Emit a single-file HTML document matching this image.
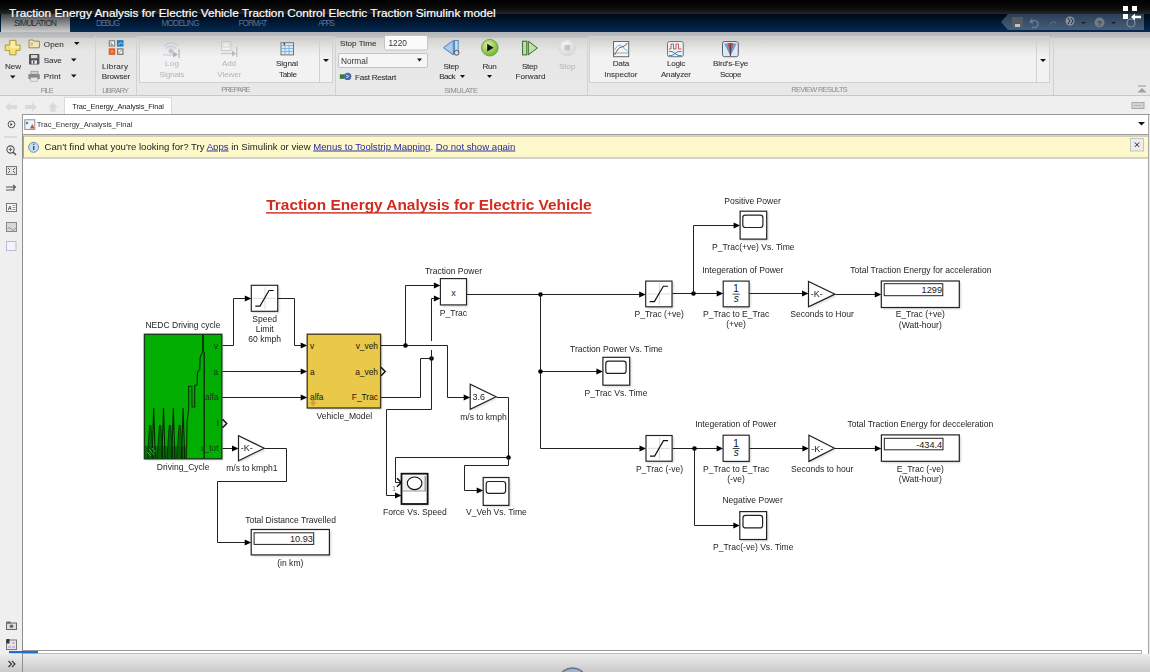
<!DOCTYPE html>
<html><head><meta charset="utf-8">
<style>
html,body{margin:0;padding:0;width:1150px;height:672px;overflow:hidden;background:#fff;}
svg{display:block;position:absolute;left:0;top:0;filter:blur(0.35px);}
text{font-family:"Liberation Sans",sans-serif;}
</style></head>
<body>
<svg width="1150" height="672" viewBox="0 0 1150 672">
<defs>
  <linearGradient id="gTop" x1="0" y1="0" x2="0" y2="1">
    <stop offset="0" stop-color="#000"/><stop offset="0.6" stop-color="#0c0c0c"/><stop offset="1" stop-color="#262626"/>
  </linearGradient>
  <linearGradient id="gTabs" x1="0" y1="0" x2="0" y2="1">
    <stop offset="0" stop-color="#000812"/><stop offset="0.5" stop-color="#011a36"/><stop offset="1" stop-color="#062a52"/>
  </linearGradient>
  <linearGradient id="gSimTab" x1="0" y1="0" x2="0" y2="1">
    <stop offset="0" stop-color="#3e4044"/><stop offset="0.45" stop-color="#808284"/><stop offset="1" stop-color="#cdcdcd"/>
  </linearGradient>
  <linearGradient id="gRib" x1="0" y1="0" x2="0" y2="1">
    <stop offset="0" stop-color="#b2b5b8"/><stop offset="0.08" stop-color="#bdbfc0"/><stop offset="0.1" stop-color="#d4d4d2"/><stop offset="0.3" stop-color="#e6e6e6"/><stop offset="1" stop-color="#e9e9e9"/>
  </linearGradient>
  <linearGradient id="gPanel" x1="0" y1="0" x2="0" y2="1">
    <stop offset="0" stop-color="#cbccc8"/><stop offset="0.3" stop-color="#eaeaea"/><stop offset="0.45" stop-color="#f2f2f2"/><stop offset="1" stop-color="#f2f2f2"/>
  </linearGradient>
  <linearGradient id="gStatus" x1="0" y1="0" x2="0" y2="1">
    <stop offset="0" stop-color="#ececec"/><stop offset="1" stop-color="#c9c9c9"/>
  </linearGradient>
  <linearGradient id="gQat" x1="0" y1="0" x2="0" y2="1">
    <stop offset="0" stop-color="#2c3f58"/><stop offset="1" stop-color="#465e7a"/>
  </linearGradient>
</defs>

<!-- ===== title bar ===== -->
<rect x="0" y="0" width="1150" height="14" fill="url(#gTop)"/>
<rect x="0" y="14" width="1150" height="18" fill="url(#gTabs)"/>
<rect x="1" y="14" width="69" height="18" fill="url(#gSimTab)"/>
<g font-size="8.2" fill="#5c7090">
  <text x="14" y="25.5" fill="#2a2a2a" textLength="43">SIMULATION</text>
  <text x="96" y="25.5" textLength="24">DEBUG</text>
  <text x="161.5" y="25.5" textLength="38">MODELING</text>
  <text x="238.5" y="25.5" textLength="29">FORMAT</text>
  <text x="318" y="25.5" textLength="17">APPS</text>
</g>
<text x="9" y="16.8" font-size="11.8" fill="#fff" stroke="#fff" stroke-width="0.2">Traction Energy Analysis for Electric Vehicle Traction Control Electric Traction Simulink model</text>
<!-- QAT -->
<path d="M1008 14 H1144 V30 H1008 L1001 22 Z" fill="url(#gQat)"/>
<g opacity="0.8">
 <rect x="1012" y="17" width="11" height="11" fill="#5a5e64"/><rect x="1015" y="24" width="5" height="3" fill="#ddd"/>
 <path d="M1032 19 l-2 3 l3 1 M1031 22 c3 -3 8 -1 7 3 c-1 3 -4 3 -6 2" stroke="#6e86a4" stroke-width="1.4" fill="none"/>
 <path d="M1050 25 c1 -4 6 -4 6 -1" stroke="#5a6f88" stroke-width="1.3" fill="none"/>
 <circle cx="1070" cy="21" r="4.5" fill="#9aa3ad"/><path d="M1068 18 l2 3 l-2 3 M1071 18 l2 3 l-2 3" stroke="#222" stroke-width="1" fill="none"/>
 <path d="M1081 22 h5 l-2.5 2 z" fill="#111"/>
 <circle cx="1099.5" cy="22.5" r="5" fill="#7d8790"/><text x="1097" y="26" font-size="8" font-weight="bold" fill="#333">?</text>
 <path d="M1111 22 h5 l-2.5 2 z" fill="#111"/>
 <circle cx="1131" cy="23" r="4" fill="none" stroke="#8fa0b4" stroke-width="1.2"/>
</g>
<!-- video overlay icon -->
<g fill="#fff">
 <rect x="1123" y="6" width="5" height="5"/><rect x="1132" y="6" width="5" height="5"/><rect x="1123" y="14" width="5" height="5"/>
 <path d="M1131 17 l4 -3.5 v2.3 h6 v2.4 h-6 v2.3 z"/>
</g>

<!-- ===== ribbon ===== -->
<rect x="0" y="32" width="1150" height="64" fill="url(#gRib)"/>
<line x1="0" y1="95.5" x2="1150" y2="95.5" stroke="#c8c8c8" stroke-width="1"/>
<!-- separators -->
<g stroke="#d2d2d2" stroke-width="1">
  <line x1="95.5" y1="36" x2="95.5" y2="95"/>
  <line x1="136.5" y1="36" x2="136.5" y2="95"/>
  <line x1="335.5" y1="36" x2="335.5" y2="95"/>
  <line x1="587.5" y1="36" x2="587.5" y2="95"/>
  <line x1="1053.5" y1="36" x2="1053.5" y2="95"/>
</g>
<!-- panels -->
<rect x="139.5" y="36.5" width="193" height="46" fill="url(#gPanel)" stroke="#d0d0d0"/>
<line x1="319.5" y1="37" x2="319.5" y2="82" stroke="#d0d0d0"/>
<rect x="589.5" y="36.5" width="460" height="46" fill="url(#gPanel)" stroke="#d0d0d0"/>
<line x1="1036.5" y1="37" x2="1036.5" y2="82" stroke="#d0d0d0"/>
<path d="M323 59 h6 l-3 3 z" fill="#111"/>
<path d="M1040 59 h6 l-3 3 z" fill="#111"/>
<!-- ribbon texts -->
<g font-size="8.1" fill="#333" stroke="#333" stroke-width="0.08">
  <text x="5" y="68.8" textLength="16">New</text>
  <text x="43.8" y="46.7" textLength="20">Open</text>
  <text x="43.8" y="62.5" textLength="18">Save</text>
  <text x="43.8" y="78.8" textLength="17">Print</text>
  <text x="102" y="68.8" textLength="26">Library</text>
  <text x="101.7" y="79.2" textLength="28.6">Browser</text>
  <text x="276" y="66.1" textLength="22">Signal</text>
  <text x="279" y="77" textLength="18">Table</text>
  <text x="340" y="46.1" textLength="36.4">Stop Time</text>
  <text x="355" y="79.5" textLength="41.3">Fast Restart</text>
  <text x="443.4" y="69.1" textLength="15.7">Step</text>
  <text x="439.2" y="79" textLength="16.4">Back</text>
  <text x="482.6" y="69.1" textLength="14.1">Run</text>
  <text x="522" y="69.1" textLength="15.7">Step</text>
  <text x="515.5" y="79" textLength="30">Forward</text>
  <text x="612.7" y="65.9" textLength="16.5">Data</text>
  <text x="604.3" y="77.2" textLength="33.1">Inspector</text>
  <text x="667" y="65.9" textLength="18.2">Logic</text>
  <text x="660.9" y="77.2" textLength="30.1">Analyzer</text>
  <text x="713" y="65.9" textLength="35.3">Bird's-Eye</text>
  <text x="720" y="77.2" textLength="21.4">Scope</text>
</g>
<g font-size="8.1" fill="#b4b4b4">
  <text x="165" y="66.1" textLength="14">Log</text>
  <text x="159.2" y="77" textLength="25.2">Signals</text>
  <text x="222" y="66.1" textLength="14">Add</text>
  <text x="217.3" y="77" textLength="24.1">Viewer</text>
  <text x="558.9" y="69.1" textLength="16.5">Stop</text>
</g>
<g font-size="7.4" fill="#8a8a8a">
  <text x="40.8" y="92.6" textLength="12.8">FILE</text>
  <text x="102.3" y="92.6" textLength="26.7">LIBRARY</text>
  <text x="221.3" y="92.2" textLength="29.2">PREPARE</text>
  <text x="444.3" y="92.6" textLength="33.6">SIMULATE</text>
  <text x="791.2" y="91.8" textLength="56.6">REVIEW RESULTS</text>
</g>
<!-- dropdown arrows -->
<g fill="#111">
  <path d="M74 42 h5.5 l-2.75 3 z"/>
  <path d="M71 58.5 h5.5 l-2.75 3 z"/>
  <path d="M71 74.5 h5.5 l-2.75 3 z"/>
  <path d="M10 75.5 h5.5 l-2.75 3 z"/>
  <path d="M460 75 h5 l-2.5 3 z"/>
  <path d="M487 75 h5 l-2.5 3 z"/>
</g>
<!-- stop time inputs -->
<rect x="384.5" y="35.5" width="43" height="14.5" rx="1.5" fill="#fafafa" stroke="#c4c4c4"/>
<text x="388.5" y="46.3" font-size="8.3" fill="#333">1220</text>
<rect x="338.5" y="53.5" width="89" height="14" rx="1.5" fill="#f6f6f6" stroke="#c4c4c4"/>
<text x="341" y="63.5" font-size="8.3" fill="#333">Normal</text>
<path d="M417 58.5 h5 l-2.5 3 z" fill="#111"/>
<path d="M1138 86 h8" stroke="#9a9a9a" stroke-width="1"/><path d="M1137.5 92.5 h9 l-4.5 -4.5 z" fill="#a0a0a0"/>

<!-- ===== tab strip ===== -->
<rect x="0" y="96" width="1150" height="19" fill="#efefef"/>
<rect x="64.5" y="97.5" width="107" height="17" fill="#fff" stroke="#dcdcdc"/>
<text x="72.3" y="109.2" font-size="7.5" fill="#222" textLength="91.7">Trac_Energy_Analysis_Final</text>
<g fill="#dadada">
 <path d="M5 107 l5 -4.5 v2.5 h7 v4 h-7 v2.5 z"/>
 <path d="M37 107 l-5 -4.5 v2.5 h-7 v4 h7 v2.5 z"/>
 <path d="M53 102.5 l5 5 h-2.5 v4.5 h-5 v-4.5 h-2.5 z"/>
</g>
<rect x="1132" y="102.5" width="12" height="6" fill="#d4d4d4" stroke="#a8a8a8"/><path d="M1134 105.5 h8" stroke="#b8b8b8" stroke-width="1"/>

<!-- ===== left sidebar ===== -->
<rect x="0" y="115" width="22.5" height="557" fill="#efefef"/>
<line x1="22.5" y1="115" x2="22.5" y2="672" stroke="#8e8e8e" stroke-width="1"/>

<!-- ===== address bar ===== -->
<rect x="22.5" y="114.5" width="1127" height="20" fill="#fff" stroke="#9a9a9a"/>
<text x="36.8" y="127.2" font-size="7.6" fill="#333" textLength="95.5">Trac_Energy_Analysis_Final</text>
<path d="M1138 122 h7 l-3.5 3.5 z" fill="#111"/>

<!-- ===== info bar ===== -->
<rect x="23.5" y="136" width="1125" height="22" fill="#fdf9cb" stroke="#a8a8a0"/>
<text x="44.6" y="149.5" font-size="9.6" fill="#222">Can't find what you're looking for? Try <tspan fill="#2a2aa0" text-decoration="underline">Apps</tspan> in Simulink or view <tspan fill="#2a2aa0" text-decoration="underline">Menus to Toolstrip Mapping</tspan>. <tspan fill="#2a2aa0" text-decoration="underline">Do not show again</tspan></text>
<rect x="1130.5" y="138.5" width="13" height="12.5" fill="#ececec" stroke="#c4c4c4"/>
<path d="M1134.8 142.5 l4.4 4.4 M1139.2 142.5 l-4.4 4.4" stroke="#222" stroke-width="1"/>

<!-- ===== canvas ===== -->
<rect x="23" y="159" width="1125.5" height="491" fill="#fff"/>
<line x1="1148.5" y1="115" x2="1148.5" y2="672" stroke="#a8a8a8"/>

<!-- ===== bottom bar ===== -->
<rect x="23" y="650" width="1125" height="4" fill="#fff"/>
<line x1="23" y1="650.5" x2="1141.5" y2="650.5" stroke="#9a9a9a"/><line x1="23" y1="653.5" x2="1141.5" y2="653.5" stroke="#bdbdbd"/><line x1="1141.5" y1="650" x2="1141.5" y2="654" stroke="#b0b0b0"/>
<rect x="23" y="654" width="1127" height="18" fill="url(#gStatus)"/><rect x="1149" y="115" width="1" height="539" fill="#e8e8e8"/>
<rect x="0" y="654" width="22" height="18" fill="url(#gStatus)"/>
<rect x="9" y="651" width="29" height="2.2" fill="#1d6fd0"/>
<path d="M8.5 661 l3 3 l-3 3 M12 661 l3 3 l-3 3" stroke="#333" stroke-width="1.1" fill="none"/>
<ellipse cx="572.5" cy="677" rx="12" ry="9" fill="#9fb4cc" stroke="#6a7480" stroke-width="1.3"/>
<ellipse cx="572.5" cy="678" rx="8" ry="6" fill="#5a7aa6"/>

<!-- ICONS_START -->
<path d="M9.7,40.3 H16 V45 H20.1 V50.4 H16 V54.8 H9.7 V50.4 H5.2 V45 H9.7 Z" fill="#f3e27a" stroke="#b09838" stroke-width="1"/>
<path d="M10.7,41.5 H15 V46 H19 V48 H10.7 Z" fill="#fff6c0" opacity="0.6"/>
<path d="M29,40 H33 L34,41.2 H39.4 V47.8 H29 Z" fill="#efe7b8" stroke="#9a8a50" stroke-width="1"/>
<rect x="30.5" y="42.5" width="2.5" height="3" fill="#b4a060" opacity="0.6"/>
<rect x="29" y="54.1" width="10.4" height="10.4" rx="0.8" fill="#555"/>
<rect x="31" y="55" width="6.4" height="3.2" fill="#d8d8d8"/>
<rect x="31.5" y="60.5" width="5.5" height="3.2" fill="#f0f0f0"/><rect x="33" y="61" width="1.4" height="2.4" fill="#444"/>
<rect x="31" y="71.2" width="7" height="3" fill="#d0d0d0" stroke="#888" stroke-width="0.6"/>
<rect x="28.3" y="74" width="11.5" height="5.2" rx="1" fill="#8a8a8a"/>
<rect x="30.5" y="77.5" width="7" height="3.7" fill="#e6e6e6" stroke="#999" stroke-width="0.5"/>
<rect x="108.7" y="40.1" width="6.5" height="6.5" fill="#8a8a8a"/><rect x="110" y="41.3" width="4" height="4" fill="#f2f2f2"/><path d="M111,44.5 V42 M111,44.5 H113" stroke="#666" stroke-width="0.7"/>
<rect x="117" y="40.1" width="6.5" height="6.5" fill="#1f7fc4"/><path d="M118.5,45 q2,-4 4,-1" stroke="#cfe6f8" stroke-width="0.8" fill="none"/>
<rect x="108.7" y="48.3" width="6.5" height="6.6" fill="#df6224"/><rect x="110.5" y="50" width="3" height="3" fill="#f08a50"/>
<rect x="117" y="48.3" width="6.5" height="6.6" fill="#777"/><rect x="118.2" y="49.5" width="4.1" height="4.2" fill="#f4f4f4"/><path d="M118.7,53 l3,-3" stroke="#666" stroke-width="0.7"/>
<g opacity="0.75"><path d="M164,46 q7,-7 14,0 M166,48.5 q5,-4.5 10,0" stroke="#b8c8d8" stroke-width="1.3" fill="none"/><circle cx="171" cy="51" r="2.5" fill="#b0b8c4"/><path d="M163,55 H175" stroke="#c4ccd4" stroke-width="1.5"/><path d="M173,51.5 l5,3 l-5,3 z" fill="#9aa0a8"/><path d="M179,49 V58" stroke="#a0a6ae" stroke-width="1.2"/></g>
<g opacity="0.75"><rect x="221.5" y="41.5" width="9.5" height="9" fill="#f4f4f4" stroke="#c0c0c0" stroke-width="1"/><rect x="223" y="43" width="6.5" height="4" fill="none" stroke="#c8c8c8" stroke-width="0.8"/><path d="M221,53.5 H233" stroke="#c0c0c0" stroke-width="1.5"/><path d="M232,50.5 l4,3 l-4,3 z" fill="#a8a8a8"/><path d="M236.8,47 V57" stroke="#b0b0b0" stroke-width="1.2"/></g>
<rect x="281" y="42.7" width="12.5" height="12.2" fill="#dbe8f6" stroke="#6f7680" stroke-width="1"/>
<path d="M281.5,45.5 H293 M281.5,48.5 H293 M281.5,51.5 H293 M285,45.5 V54.5 M289,45.5 V54.5" stroke="#6aa0d8" stroke-width="0.7"/>
<path d="M283,44 l2,-1.2 v2.4 z" fill="#333"/>
<path d="M443.5,47.7 L453.3,40.5 V54.9 Z" fill="#a9cbec" stroke="#4a7eb8" stroke-width="1"/>
<rect x="454.6" y="40.5" width="3.6" height="12" fill="#c4dcf0" stroke="#4a7eb8" stroke-width="0.9"/>
<circle cx="456.6" cy="52.8" r="2.4" fill="#ddd" stroke="#444" stroke-width="0.9"/>
<defs><radialGradient id="gRun" cx="0.4" cy="0.35" r="0.7"><stop offset="0" stop-color="#d8f0a0"/><stop offset="1" stop-color="#6fb02c"/></radialGradient><radialGradient id="gStop" cx="0.4" cy="0.35" r="0.7"><stop offset="0" stop-color="#f6f6f6"/><stop offset="1" stop-color="#d6d6d6"/></radialGradient></defs>
<circle cx="489.8" cy="47.7" r="8.3" fill="url(#gRun)" stroke="#5a9a28" stroke-width="0.8"/>
<path d="M487.2,43.8 L493.6,47.7 L487.2,51.6 Z" fill="#111"/>
<rect x="522.6" y="41.2" width="4.2" height="13.7" fill="#bfe0a8" stroke="#3a6a2a" stroke-width="1"/>
<path d="M528.3,41.2 L537.4,48 L528.3,54.9 Z" fill="#bfe0a8" stroke="#3a6a2a" stroke-width="1"/>
<circle cx="567.4" cy="47.7" r="8" fill="url(#gStop)" stroke="#d4d4d4" stroke-width="0.8"/><rect x="564.6" y="44.9" width="5.6" height="5.6" fill="#c4c4c4"/>
<rect x="339.8" y="74.3" width="5" height="4.6" fill="#3c7a3c"/><circle cx="347.7" cy="76.4" r="3.6" fill="#4a68a8"/><path d="M346,75 l3,1.4 l-3,1.4" stroke="#dfe6f4" stroke-width="0.8" fill="none"/>
<rect x="613.5" y="41.5" width="15.2" height="15.2" fill="#f2f6fa" stroke="#6a6a6a" stroke-width="1"/>
<path d="M614.5,55 q4,-8 7,-8 t6,-4" stroke="#444" stroke-width="0.9" fill="none"/><path d="M614.5,50 q4,-7 7,-4 t6,5" stroke="#6aa8c8" stroke-width="0.9" fill="none"/><path d="M614,53 H628" stroke="#777" stroke-width="0.6"/>
<rect x="667.5" y="41.5" width="15.8" height="15.2" rx="2" fill="#e8f0f8" stroke="#667888" stroke-width="1"/>
<path d="M669,49 H671 V44 H673.5 V49 H676 V44 H678.5 V49 H681.5" stroke="#d04a3a" stroke-width="0.9" fill="none"/>
<path d="M669,51.5 H672 L678,55.5 H681.5 M669,55.5 H672 L678,51.5 H681.5" stroke="#3a7ab0" stroke-width="0.9" fill="none"/>
<rect x="722.5" y="41.5" width="15.8" height="15.2" rx="2" fill="#dce8f4" stroke="#5a6070" stroke-width="1"/>
<path d="M724,43.5 L730.4,56 L736.8,43.5 Z" fill="#6aa0d0"/><path d="M727.5,43 L730.4,56 L733.3,43 Z" fill="#e04848"/><path d="M730.4,43 V56" stroke="#333" stroke-width="0.8"/>
<g stroke="#555" fill="none"><circle cx="11.5" cy="124.4" r="3.4" stroke-width="1"/><path d="M10.5,122.8 l2,1.6 l-2,1.6 z" fill="#333" stroke="none"/><line x1="4" y1="137" x2="17" y2="137" stroke="#c8c8c8"/><circle cx="10.5" cy="149.5" r="3.6" stroke-width="1.1"/><path d="M13,152 l3,3" stroke-width="1.6"/><path d="M8.8,149.5 h3.4 M10.5,147.8 v3.4" stroke-width="0.9"/><rect x="6.5" y="166.5" width="10" height="8" fill="#e4e4e4" stroke="#777"/><path d="M8,168 l2,2 M15,168 l-2,2 M8,173 l2,-2 M15,173 l-2,-2" stroke-width="0.9"/><path d="M6,187 H15 M6,190 H15 M13,185 l2.5,2 l-2.5,2" stroke-width="1.1"/><rect x="6.5" y="203.5" width="10" height="8" fill="#fafafa" stroke="#777"/><text x="7.8" y="209.8" font-size="5.5" font-weight="bold" fill="#333" stroke="none">A</text><path d="M12.5,205.5 h3 M12.5,207.5 h3 M12.5,209.5 h3" stroke-width="0.6"/><rect x="6.5" y="222.5" width="10" height="9" fill="#d8d8d8" stroke="#888"/><path d="M7.5,229 q2,-3 4,0 t4,-1" stroke="#777" stroke-width="0.8"/><rect x="6.5" y="241.5" width="9.5" height="9" fill="#f4f2fa" stroke="#c0b8d8"/><rect x="6.5" y="623" width="10" height="6.5" fill="#ddd" stroke="#666"/><rect x="6.5" y="621.5" width="4" height="2" fill="#666" stroke="none"/><circle cx="11.5" cy="626.3" r="1.8" fill="#666" stroke="none"/><rect x="6.5" y="640" width="10" height="9.5" fill="#e6e6e6" stroke="#777"/><rect x="6.5" y="639" width="3" height="4.5" fill="#333" stroke="none"/><path d="M12,643 h3 M8,647 h3 M12,647 h3" stroke="#9a8ab8" stroke-width="0.9"/></g>
<rect x="24.8" y="119.8" width="10" height="9.6" fill="#f4f4f4" stroke="#7a8494" stroke-width="0.9"/><path d="M26,121.5 l3,1.5 l-3,1.5 z" fill="#3a78c0"/><path d="M30,128.5 l2.3,-4.5 l2.3,4.5 z" fill="#c84a2c"/>
<circle cx="33.6" cy="147.3" r="5" fill="#c8dcf0" stroke="#7090b8" stroke-width="1"/><rect x="33" y="146" width="1.4" height="4" fill="#2a5a98"/><circle cx="33.7" cy="144.3" r="0.8" fill="#2a5a98"/>
<!-- ICONS_END -->
<!-- DIAGRAM_START -->
<defs><filter id="blur1" x="-20%" y="-20%" width="140%" height="140%"><feGaussianBlur stdDeviation="0.9"/></filter></defs>
<g id="diagram">
<text x="266.3" y="210" font-size="15.4" font-weight="bold" fill="#d22a1c">Traction Energy Analysis for Electric Vehicle</text>
<rect x="266" y="212.2" width="325.5" height="1.4" fill="#d22a1c"/>
<path d="M222.5,345.5 L233.5,345.5 L233.5,298.5 L246.5,298.5" fill="none" stroke="#222" stroke-width="1"/>
<path d="M251.3,298.5 L244.8,295.4 L244.8,301.6 Z" fill="#000"/>
<path d="M277.5,298.5 L294.5,298.5 L294.5,345.5 L302.5,345.5" fill="none" stroke="#222" stroke-width="1"/>
<path d="M307.2,345.5 L300.7,342.4 L300.7,348.6 Z" fill="#000"/>
<path d="M222.5,371.5 L302.5,371.5" fill="none" stroke="#222" stroke-width="1"/>
<path d="M307.2,371.5 L300.7,368.4 L300.7,374.6 Z" fill="#000"/>
<path d="M222.5,397.5 L302.5,397.5" fill="none" stroke="#222" stroke-width="1"/>
<path d="M307.2,397.5 L300.7,394.4 L300.7,400.6 Z" fill="#000"/>
<path d="M222.5,448.5 L233.5,448.5" fill="none" stroke="#222" stroke-width="1"/>
<path d="M238.5,448.5 L232.0,445.4 L232.0,451.6 Z" fill="#000"/>
<path d="M264.5,448.5 L286.5,448.5 L286.5,481.5 L217.5,481.5 L217.5,542.5 L246.5,542.5" fill="none" stroke="#222" stroke-width="1"/>
<path d="M251.2,542.5 L244.7,539.4 L244.7,545.6 Z" fill="#000"/>
<path d="M380.5,345.5 L447.5,345.5 L447.5,397.5 L465.5,397.5" fill="none" stroke="#222" stroke-width="1"/>
<path d="M470.2,397.5 L463.7,394.4 L463.7,400.6 Z" fill="#000"/>
<path d="M405.5,345.5 L405.5,285.5 L435.5,285.5" fill="none" stroke="#222" stroke-width="1"/>
<path d="M440.4,285.5 L433.9,282.4 L433.9,288.6 Z" fill="#000"/>
<circle cx="405.5" cy="345.5" r="2.3" fill="#000"/>
<path d="M380.5,397.5 L420.5,397.5 L420.5,358.5 L431.5,358.5" fill="none" stroke="#222" stroke-width="1"/>
<circle cx="431.5" cy="358.5" r="2.3" fill="#000"/>
<path d="M431.5,358.5 L431.5,298.5 L435.5,298.5" fill="none" stroke="#222" stroke-width="1"/>
<path d="M440.4,298.5 L433.9,295.4 L433.9,301.6 Z" fill="#000"/>
<path d="M431.5,358.5 L431.5,409.5 L386.5,409.5 L386.5,495.5 L396.5,495.5" fill="none" stroke="#222" stroke-width="1"/>
<path d="M401.5,495.5 L395.0,492.4 L395.0,498.6 Z" fill="#000"/>
<path d="M496.5,397.5 L508.5,397.5 L508.5,457.5" fill="none" stroke="#222" stroke-width="1"/>
<circle cx="508.5" cy="457.5" r="2.3" fill="#000"/>
<rect x="429.6" y="341" width="3" height="9" fill="#fff"/>
<path d="M428.5,345.5 L434.5,345.5" fill="none" stroke="#222" stroke-width="1"/>
<path d="M508.5,457.5 L395.5,457.5 L395.5,482.5 L401.5,482.5" fill="none" stroke="#222" stroke-width="1"/>
<path d="M397,478.3 L401.3,482.5 L397,486.7" fill="none" stroke="#111" stroke-width="1.6"/>
<path d="M508.5,457.5 L508.5,465.5 L464.5,465.5 L464.5,490.5 L478.5,490.5" fill="none" stroke="#222" stroke-width="1"/>
<path d="M483.2,490.5 L476.7,487.4 L476.7,493.6 Z" fill="#000"/>
<path d="M466.5,294.5 L640.5,294.5" fill="none" stroke="#222" stroke-width="1"/>
<path d="M645.7,294.5 L639.2,291.4 L639.2,297.6 Z" fill="#000"/>
<circle cx="540.5" cy="294.5" r="2.3" fill="#000"/>
<path d="M540.5,294.5 L540.5,448.5 L640.5,448.5" fill="none" stroke="#222" stroke-width="1"/>
<path d="M646,448.5 L639.5,445.4 L639.5,451.6 Z" fill="#000"/>
<path d="M540.5,371.5 L597.5,371.5" fill="none" stroke="#222" stroke-width="1"/>
<path d="M602.9,371.5 L596.4,368.4 L596.4,374.6 Z" fill="#000"/>
<circle cx="540.5" cy="371.5" r="2.3" fill="#000"/>
<path d="M672.5,293.5 L717.5,293.5" fill="none" stroke="#222" stroke-width="1"/>
<path d="M723.2,293.5 L716.7,290.4 L716.7,296.6 Z" fill="#000"/>
<circle cx="693.5" cy="293.5" r="2.3" fill="#000"/>
<path d="M693.5,293.5 L693.5,225.5 L734.5,225.5" fill="none" stroke="#222" stroke-width="1"/>
<path d="M740.1,225.5 L733.6,222.4 L733.6,228.6 Z" fill="#000"/>
<path d="M749.5,293.5 L803.5,293.5" fill="none" stroke="#222" stroke-width="1"/>
<path d="M808.5,293.5 L802.0,290.4 L802.0,296.6 Z" fill="#000"/>
<path d="M835.5,294.5 L875.5,294.5" fill="none" stroke="#222" stroke-width="1"/>
<path d="M881.3,294.5 L874.8,291.4 L874.8,297.6 Z" fill="#000"/>
<path d="M672.5,448.5 L717.5,448.5" fill="none" stroke="#222" stroke-width="1"/>
<path d="M723.1,448.5 L716.6,445.4 L716.6,451.6 Z" fill="#000"/>
<circle cx="694.5" cy="448.5" r="2.3" fill="#000"/>
<path d="M694.5,448.5 L694.5,525.5 L734.5,525.5" fill="none" stroke="#222" stroke-width="1"/>
<path d="M739.8,525.5 L733.3,522.4 L733.3,528.6 Z" fill="#000"/>
<path d="M749.5,448.5 L803.5,448.5" fill="none" stroke="#222" stroke-width="1"/>
<path d="M808.9,448.5 L802.4,445.4 L802.4,451.6 Z" fill="#000"/>
<path d="M834.5,448.5 L875.5,448.5" fill="none" stroke="#222" stroke-width="1"/>
<path d="M881.4,448.5 L874.9,445.4 L874.9,451.6 Z" fill="#000"/>
<rect x="145.5" y="335.5" width="77.5" height="124.5" fill="#000" opacity="0.2" filter="url(#blur1)"/>
<rect x="144.4" y="334.3" width="77.4" height="124.5" fill="#03ae03" stroke="#163a16" stroke-width="1.4"/>
<path d="M203,334.5 V352 M204.2,352 V458.5" stroke="#0b2e0b" stroke-width="1.4"/>
<path d="M203,334.5 L203,351.4 L200.1,357.4 L199.8,368.8 L197.4,372.8 L197.1,384.9 L194.7,385.6 L194.7,407 L192,407 L191.8,386.2 L188.7,386.2 L188.7,409 L187,422.5 L186.5,458.5" fill="none" stroke="#0b2e0b" stroke-width="1.1"/>
<path d="M145,446 H187 V458.6 H145 Z" fill="#064806" opacity="0.55"/>
<path d="M147.3,458.6 L149.70000000000002,425.4 L150.9,425.4 L153.3,458.6 Z" fill="#075807" opacity="0.75"/>
<path d="M147.3,458.6 L149.70000000000002,425.4 L150.9,425.4 L153.3,458.6" fill="none" stroke="#063006" stroke-width="0.9"/>
<path d="M152.10000000000002,458.6 L153.70000000000002,408 L155.3,458.6" fill="none" stroke="#052805" stroke-width="1.1"/>
<path d="M157.10000000000002,458.6 L159.50000000000003,425.4 L160.70000000000002,425.4 L163.10000000000002,458.6 Z" fill="#075807" opacity="0.75"/>
<path d="M157.10000000000002,458.6 L159.50000000000003,425.4 L160.70000000000002,425.4 L163.10000000000002,458.6" fill="none" stroke="#063006" stroke-width="0.9"/>
<path d="M161.90000000000003,458.6 L163.50000000000003,408 L165.10000000000002,458.6" fill="none" stroke="#052805" stroke-width="1.1"/>
<path d="M166.9,458.6 L169.3,425.4 L170.5,425.4 L172.9,458.6 Z" fill="#075807" opacity="0.75"/>
<path d="M166.9,458.6 L169.3,425.4 L170.5,425.4 L172.9,458.6" fill="none" stroke="#063006" stroke-width="0.9"/>
<path d="M171.70000000000002,458.6 L173.3,408 L174.9,458.6" fill="none" stroke="#052805" stroke-width="1.1"/>
<path d="M176.70000000000002,458.6 L179.10000000000002,425.4 L180.3,425.4 L182.70000000000002,458.6 Z" fill="#075807" opacity="0.75"/>
<path d="M176.70000000000002,458.6 L179.10000000000002,425.4 L180.3,425.4 L182.70000000000002,458.6" fill="none" stroke="#063006" stroke-width="0.9"/>
<path d="M181.50000000000003,458.6 L183.10000000000002,408 L184.70000000000002,458.6" fill="none" stroke="#052805" stroke-width="1.1"/>
<path d="M147,452 l4,4 M149,449 l5,6 M152,448 l3,4" stroke="#8fdc8f" stroke-width="0.8" opacity="0.7"/>
<text x="218" y="348.5" font-size="8.3" fill="#143414" text-anchor="end" >v</text>
<text x="218" y="374.5" font-size="8.3" fill="#143414" text-anchor="end" >a</text>
<text x="218.5" y="400" font-size="8.3" fill="#143414" text-anchor="end" >alfa</text>
<text x="219" y="425.5" font-size="8.3" fill="#143414" text-anchor="end" >I</text>
<text x="218.5" y="451" font-size="8.3" fill="#143414" text-anchor="end" >x_tot</text>
<path d="M222.5,419.3 L226.7,423.5 L222.5,427.7" fill="none" stroke="#111" stroke-width="1.5"/>
<rect x="252.8" y="286.8" width="26.399999999999977" height="26.0" fill="#000" opacity="0.18" filter="url(#blur1)"/>
<rect x="251.3" y="285.3" width="26.399999999999977" height="26.0" fill="#fff" stroke="#222" stroke-width="1.15"/>
<path d="M265.0,287.3 V309.3 M253.3,298.3 H275.7" stroke="#d0d0d0" stroke-width="0.8"/>
<path d="M255.3,306.1 H260.012 L268.988,290.5 H273.7" fill="none" stroke="#111" stroke-width="1.2"/>
<rect x="308.5" y="335.5" width="73.4" height="73.8" fill="#000" opacity="0.2" filter="url(#blur1)"/>
<rect x="307.2" y="334.2" width="73.4" height="73.8" fill="#e9c84a" stroke="#3c3418" stroke-width="1.3"/>
<text x="310" y="348.5" font-size="8.4" fill="#1a160a" text-anchor="start" >v</text>
<text x="310" y="374.5" font-size="8.4" fill="#1a160a" text-anchor="start" >a</text>
<text x="310" y="400.3" font-size="8.4" fill="#1a160a" text-anchor="start" >alfa</text>
<text x="378" y="348.5" font-size="8.4" fill="#1a160a" text-anchor="end" >v_veh</text>
<text x="378" y="374.5" font-size="8.4" fill="#1a160a" text-anchor="end" >a_veh</text>
<text x="378" y="400.3" font-size="8.4" fill="#1a160a" text-anchor="end" >F_Trac</text>
<path d="M381,367.3 L385.2,371.5 L381,375.7" fill="none" stroke="#111" stroke-width="1.5"/>
<path d="M311.5,399.5 h3 v3 h2 l-3.5,3.5 l-3.5,-3.5 h2 z" fill="#b89a3c" opacity="0.75"/>
<rect x="441.9" y="280.1" width="26.100000000000023" height="26.299999999999955" fill="#000" opacity="0.18" filter="url(#blur1)"/>
<rect x="440.4" y="278.6" width="26.100000000000023" height="26.299999999999955" fill="#fff" stroke="#222" stroke-width="1.15"/>
<text x="453.5" y="295.5" font-size="9" fill="#222" text-anchor="middle" >x</text>
<path d="M471.7,385.6 L471.7,410.8 L497.5,398.20000000000005 Z" fill="#000" opacity="0.15" filter="url(#blur1)"/>
<path d="M470.2,384.1 L470.2,409.3 L496,396.70000000000005 Z" fill="#fff" stroke="#222" stroke-width="1.2" stroke-linejoin="miter"/>
<text x="472.5" y="399.90000000000003" font-size="9" fill="#222" text-anchor="start" >3.6</text>
<path d="M240.0,437.2 L240.0,462.2 L265.7,449.7 Z" fill="#000" opacity="0.15" filter="url(#blur1)"/>
<path d="M238.5,435.7 L238.5,460.7 L264.2,448.2 Z" fill="#fff" stroke="#222" stroke-width="1.2" stroke-linejoin="miter"/>
<text x="240.8" y="451.4" font-size="9" fill="#222" text-anchor="start" >-K-</text>
<rect x="402.5" y="475" width="26" height="30.3" fill="#000" opacity="0.2" filter="url(#blur1)"/>
<rect x="401.5" y="473.7" width="26.1" height="30.3" fill="#fff" stroke="#111" stroke-width="1.8"/>
<rect x="403" y="475.5" width="23" height="15.5" fill="#efefef"/><rect x="424.5" y="476" width="1.5" height="15" fill="#a0a0a0"/>
<line x1="403" y1="491" x2="426" y2="491" stroke="#9a9a9a" stroke-width="1"/>
<ellipse cx="414.6" cy="483.3" rx="7.3" ry="6.3" fill="#fff" stroke="#111" stroke-width="1.1"/>
<text x="392" y="490.8" font-size="7.5" fill="#777" text-anchor="start" >1</text>
<rect x="484.7" y="479.0" width="25.69999999999999" height="27.899999999999977" fill="#000" opacity="0.18" filter="url(#blur1)"/>
<rect x="483.2" y="477.5" width="25.69999999999999" height="27.899999999999977" fill="#fff" stroke="#222" stroke-width="1.2"/>
<rect x="486.2" y="481.5" width="19.400000000000034" height="11.800000000000011" rx="2.5" fill="#fff" stroke="#222" stroke-width="1.2"/>
<rect x="252.7" y="531.0" width="78.19999999999999" height="25.399999999999977" fill="#000" opacity="0.18" filter="url(#blur1)"/>
<rect x="251.2" y="529.5" width="78.19999999999999" height="25.399999999999977" fill="#fff" stroke="#222" stroke-width="1.2"/>
<rect x="254.1" y="532.8" width="59.599999999999994" height="11.600000000000023" fill="#fff" stroke="#222" stroke-width="1"/>
<text x="312.9" y="542.1" font-size="9.2" fill="#222" text-anchor="end" >10.93</text>
<rect x="604.4" y="358.8" width="26.800000000000068" height="27.899999999999977" fill="#000" opacity="0.18" filter="url(#blur1)"/>
<rect x="602.9" y="357.3" width="26.800000000000068" height="27.899999999999977" fill="#fff" stroke="#222" stroke-width="1.2"/>
<rect x="605.8" y="361.1" width="20.300000000000068" height="12.299999999999955" rx="2.5" fill="#fff" stroke="#222" stroke-width="1.2"/>
<rect x="647.2" y="282.6" width="26.299999999999955" height="25.69999999999999" fill="#000" opacity="0.18" filter="url(#blur1)"/>
<rect x="645.7" y="281.1" width="26.299999999999955" height="25.69999999999999" fill="#fff" stroke="#222" stroke-width="1.15"/>
<path d="M659.35,283.1 V304.8 M647.7,293.95000000000005 H670" stroke="#d0d0d0" stroke-width="0.8"/>
<path d="M649.7,301.66 H654.379 L663.321,286.24 H668" fill="none" stroke="#111" stroke-width="1.2"/>
<rect x="724.7" y="282.6" width="25.899999999999977" height="25.69999999999999" fill="#000" opacity="0.18" filter="url(#blur1)"/>
<rect x="723.2" y="281.1" width="25.899999999999977" height="25.69999999999999" fill="#fff" stroke="#222" stroke-width="1.15"/>
<text x="736.1500000000001" y="292.15000000000003" font-family="Liberation Serif" font-size="10" text-anchor="middle" fill="#111">1</text>
<line x1="732.6500000000001" y1="294.15000000000003" x2="739.6500000000001" y2="294.15000000000003" stroke="#111" stroke-width="0.8"/>
<text x="736.1500000000001" y="301.95000000000005" font-family="Liberation Serif" font-style="italic" font-size="10" text-anchor="middle" fill="#111">s</text>
<rect x="741.6" y="212.7" width="26.600000000000023" height="27.900000000000006" fill="#000" opacity="0.18" filter="url(#blur1)"/>
<rect x="740.1" y="211.2" width="26.600000000000023" height="27.900000000000006" fill="#fff" stroke="#222" stroke-width="1.2"/>
<rect x="742.8" y="215.2" width="20.100000000000023" height="12.300000000000011" rx="2.5" fill="#fff" stroke="#222" stroke-width="1.2"/>
<path d="M810.0,283.0 L810.0,308.3 L836.5,295.65 Z" fill="#000" opacity="0.15" filter="url(#blur1)"/>
<path d="M808.5,281.5 L808.5,306.8 L835,294.15 Z" fill="#fff" stroke="#222" stroke-width="1.2" stroke-linejoin="miter"/>
<text x="810.8" y="297.34999999999997" font-size="9" fill="#222" text-anchor="start" >-K-</text>
<rect x="882.8" y="282.5" width="78.0" height="26.5" fill="#000" opacity="0.18" filter="url(#blur1)"/>
<rect x="881.3" y="281" width="78.0" height="26.5" fill="#fff" stroke="#222" stroke-width="1.2"/>
<rect x="884.2" y="283.7" width="58.59999999999991" height="12.0" fill="#fff" stroke="#222" stroke-width="1"/>
<text x="942.0" y="293.4" font-size="9.2" fill="#222" text-anchor="end" >1299</text>
<rect x="647.5" y="437.0" width="26.100000000000023" height="25.69999999999999" fill="#000" opacity="0.18" filter="url(#blur1)"/>
<rect x="646" y="435.5" width="26.100000000000023" height="25.69999999999999" fill="#fff" stroke="#222" stroke-width="1.15"/>
<path d="M659.55,437.5 V459.2 M648,448.35 H670.1" stroke="#d0d0d0" stroke-width="0.8"/>
<path d="M650,456.06 H654.613 L663.487,440.64 H668.1" fill="none" stroke="#111" stroke-width="1.2"/>
<rect x="724.6" y="436.7" width="26.100000000000023" height="26.19999999999999" fill="#000" opacity="0.18" filter="url(#blur1)"/>
<rect x="723.1" y="435.2" width="26.100000000000023" height="26.19999999999999" fill="#fff" stroke="#222" stroke-width="1.15"/>
<text x="736.1500000000001" y="446.49999999999994" font-family="Liberation Serif" font-size="10" text-anchor="middle" fill="#111">1</text>
<line x1="732.6500000000001" y1="448.49999999999994" x2="739.6500000000001" y2="448.49999999999994" stroke="#111" stroke-width="0.8"/>
<text x="736.1500000000001" y="456.29999999999995" font-family="Liberation Serif" font-style="italic" font-size="10" text-anchor="middle" fill="#111">s</text>
<path d="M810.4,436.7 L810.4,462.9 L836.0,449.79999999999995 Z" fill="#000" opacity="0.15" filter="url(#blur1)"/>
<path d="M808.9,435.2 L808.9,461.4 L834.5,448.29999999999995 Z" fill="#fff" stroke="#222" stroke-width="1.2" stroke-linejoin="miter"/>
<text x="811.1999999999999" y="451.49999999999994" font-size="9" fill="#222" text-anchor="start" >-K-</text>
<rect x="882.9" y="436.4" width="77.89999999999998" height="26.400000000000034" fill="#000" opacity="0.18" filter="url(#blur1)"/>
<rect x="881.4" y="434.9" width="77.89999999999998" height="26.400000000000034" fill="#fff" stroke="#222" stroke-width="1.2"/>
<rect x="884.3" y="438.3" width="58.700000000000045" height="11.5" fill="#fff" stroke="#222" stroke-width="1"/>
<text x="942.2" y="447.5" font-size="9.2" fill="#222" text-anchor="end" >-434.4</text>
<rect x="741.3" y="513.1" width="26.800000000000068" height="27.899999999999977" fill="#000" opacity="0.18" filter="url(#blur1)"/>
<rect x="739.8" y="511.6" width="26.800000000000068" height="27.899999999999977" fill="#fff" stroke="#222" stroke-width="1.2"/>
<rect x="743" y="515.4" width="19.600000000000023" height="12.5" rx="2.5" fill="#fff" stroke="#222" stroke-width="1.2"/>
<text x="145.4" y="328.1" font-size="8.55" fill="#252525" text-anchor="start" >NEDC Driving cycle</text>
<text x="156.8" y="470.3" font-size="8.55" fill="#252525" text-anchor="start" >Driving_Cycle</text>
<text x="264.7" y="321.5" font-size="8.55" fill="#252525" text-anchor="middle" >Speed</text>
<text x="264.7" y="331.9" font-size="8.55" fill="#252525" text-anchor="middle" >Limit</text>
<text x="264.7" y="341.9" font-size="8.55" fill="#252525" text-anchor="middle" >60 kmph</text>
<text x="316.6" y="419.3" font-size="8.55" fill="#252525" text-anchor="start" >Vehicle_Model</text>
<text x="424.9" y="273.9" font-size="8.55" fill="#252525" text-anchor="start" >Traction Power</text>
<text x="439.8" y="316.3" font-size="8.55" fill="#252525" text-anchor="start" >P_Trac</text>
<text x="460.2" y="419.9" font-size="8.55" fill="#252525" text-anchor="start" >m/s to kmph</text>
<text x="226.2" y="471.3" font-size="8.55" fill="#252525" text-anchor="start" >m/s to kmph1</text>
<text x="245.2" y="523.1" font-size="8.55" fill="#252525" text-anchor="start" >Total Distance Travelled</text>
<text x="290.3" y="566.2" font-size="8.55" fill="#252525" text-anchor="middle" >(in km)</text>
<text x="383" y="514.8" font-size="8.55" fill="#252525" text-anchor="start" >Force Vs. Speed</text>
<text x="466" y="515.0" font-size="8.55" fill="#252525" text-anchor="start" >V_Veh Vs. Time</text>
<text x="724.3" y="204.3" font-size="8.55" fill="#252525" text-anchor="start" >Positive Power</text>
<text x="712" y="249.7" font-size="8.55" fill="#252525" text-anchor="start" >P_Trac(+ve) Vs. Time</text>
<text x="702.2" y="273.1" font-size="8.55" fill="#252525" text-anchor="start" >Integeration of Power</text>
<text x="634.5" y="317.3" font-size="8.55" fill="#252525" text-anchor="start" >P_Trac (+ve)</text>
<text x="703" y="317.3" font-size="8.55" fill="#252525" text-anchor="start" >P_Trac to E_Trac</text>
<text x="736" y="327.2" font-size="8.55" fill="#252525" text-anchor="middle" >(+ve)</text>
<text x="790.2" y="317.0" font-size="8.55" fill="#252525" text-anchor="start" >Seconds to Hour</text>
<text x="850.3" y="273.4" font-size="8.55" fill="#252525" text-anchor="start" >Total Traction Energy for acceleration</text>
<text x="920.3" y="317.0" font-size="8.55" fill="#252525" text-anchor="middle" >E_Trac (+ve)</text>
<text x="920.3" y="327.6" font-size="8.55" fill="#252525" text-anchor="middle" >(Watt-hour)</text>
<text x="570" y="351.6" font-size="8.55" fill="#252525" text-anchor="start" >Traction Power Vs. Time</text>
<text x="584.6" y="395.8" font-size="8.55" fill="#252525" text-anchor="start" >P_Trac Vs. Time</text>
<text x="635.9" y="471.7" font-size="8.55" fill="#252525" text-anchor="start" >P_Trac (-ve)</text>
<text x="695.2" y="427.2" font-size="8.55" fill="#252525" text-anchor="start" >Integeration of Power</text>
<text x="703" y="471.9" font-size="8.55" fill="#252525" text-anchor="start" >P_Trac to E_Trac</text>
<text x="736" y="482.0" font-size="8.55" fill="#252525" text-anchor="middle" >(-ve)</text>
<text x="791" y="471.9" font-size="8.55" fill="#252525" text-anchor="start" >Seconds to hour</text>
<text x="847.4" y="427.3" font-size="8.55" fill="#252525" text-anchor="start" >Total Traction Energy for decceleration</text>
<text x="920.3" y="471.7" font-size="8.55" fill="#252525" text-anchor="middle" >E_Trac (-ve)</text>
<text x="920.3" y="481.7" font-size="8.55" fill="#252525" text-anchor="middle" >(Watt-hour)</text>
<text x="722.4" y="503.2" font-size="8.55" fill="#252525" text-anchor="start" >Negative Power</text>
<text x="713" y="550.1" font-size="8.55" fill="#252525" text-anchor="start" >P_Trac(-ve) Vs. Time</text>
</g>
<!-- DIAGRAM_END -->
</svg>
</body></html>
